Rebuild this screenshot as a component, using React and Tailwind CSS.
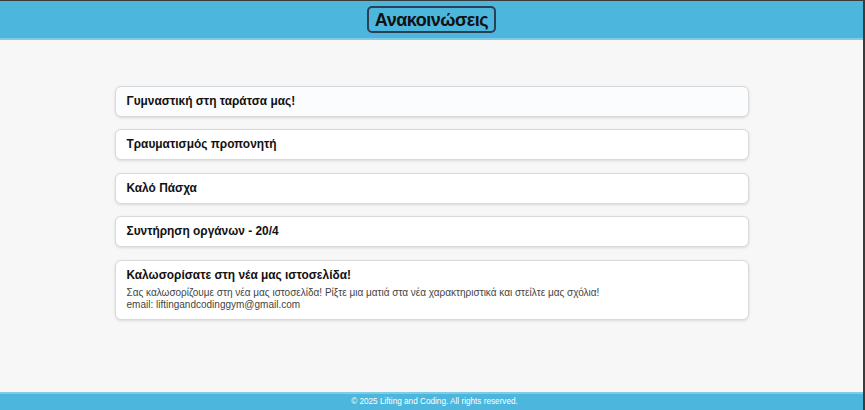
import React from "react";

const announcements = [
  { title: "Γυμναστική στη ταράτσα μας!", hover: true },
  { title: "Τραυματισμός προπονητή" },
  { title: "Καλό Πάσχα" },
  { title: "Συντήρηση οργάνων - 20/4" },
  {
    title: "Καλωσορίσατε στη νέα μας ιστοσελίδα!",
    body: [
      "Σας καλωσορίζουμε στη νέα μας ιστοσελίδα! Ρίξτε μια ματιά στα νέα χαρακτηριστικά και στείλτε μας σχόλια!",
      "email: liftingandcodinggym@gmail.com",
    ],
  },
];

export default function App() {
  return (
    <div className="h-[410px] flex flex-col bg-[#f7f7f7] border-t border-r-2 border-[#3b3b3b] font-[family-name:'Liberation_Sans',Arial,sans-serif]">
      <header className="h-[39px] bg-[#4db6dd] border-b-2 border-[#7fcbe8] flex items-center justify-center shrink-0">
        <h1 className="px-[6px] h-[27px] flex items-center border-2 border-[#2b3f55] rounded-[5px] text-[18px] tracking-[-0.5px] font-bold text-[#111] leading-none">
          Ανακοινώσεις
        </h1>
      </header>

      <main className="flex-1 pt-[45.5px]">
        <div className="w-[634px] mx-auto flex flex-col gap-[12.5px]">
          {announcements.map((a) => (
            <div
              key={a.title}
              className={`rounded-[6px] border border-[#d9d9d9] shadow-[0_1px_3px_rgba(0,0,0,0.12)] px-[11px] ${a.hover ? "bg-[#fbfcfe]" : "bg-white"} ${a.body ? "pt-[7px] pb-[8px]" : "py-[7px]"}`}
            >
              <div className="text-[11.9px] font-bold text-[#111] leading-[15px]">{a.title}</div>
              {a.body && (
                <div className="mt-[4px] text-[10px] text-[#444] leading-[12px]">
                  {a.body.map((line) => (
                    <div key={line}>{line}</div>
                  ))}
                </div>
              )}
            </div>
          ))}
        </div>
      </main>

      <footer className="h-[18px] bg-[#4db6dd] border-t-2 border-[#7fcbe8] flex items-center justify-center shrink-0">
        <span className="pl-[6px] text-[8.2px] text-white leading-none">© 2025 Lifting and Coding. All rights reserved.</span>
      </footer>
    </div>
  );
}
